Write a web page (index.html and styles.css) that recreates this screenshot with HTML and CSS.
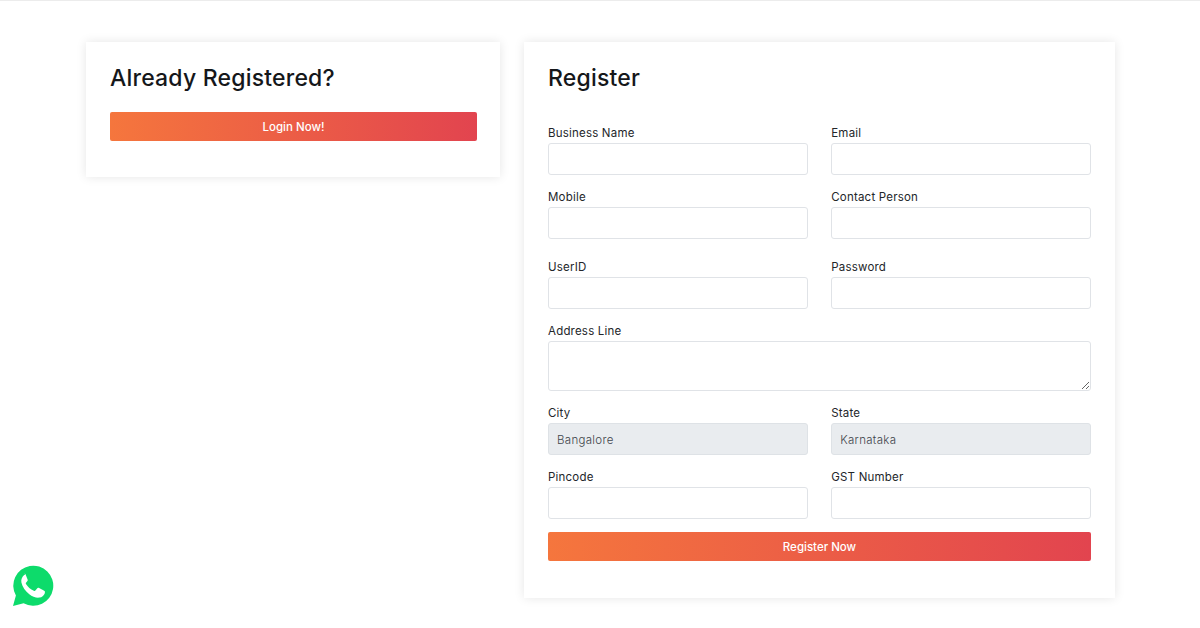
FILE: index.html
```html
<!DOCTYPE html>
<html lang="en">
<head>
<meta charset="utf-8">
<title>Register</title>
<link rel="stylesheet" href="styles.css">
</head>
<body>
<main class="page">
  <section class="card card-login">
    <h2 class="title">Already Registered?</h2>
    <a class="btn" href="#">Login Now!</a>
  </section>
  <section class="card card-register">
    <h2 class="title">Register</h2>
    <form class="form">
      <div class="row">
        <div class="field"><label>Business Name</label><input class="input" type="text"></div>
        <div class="field"><label>Email</label><input class="input" type="text"></div>
      </div>
      <div class="row row-loose">
        <div class="field"><label>Mobile</label><input class="input" type="text"></div>
        <div class="field"><label>Contact Person</label><input class="input" type="text"></div>
      </div>
      <div class="row">
        <div class="field"><label>UserID</label><input class="input" type="text"></div>
        <div class="field"><label>Password</label><input class="input" type="text"></div>
      </div>
      <div class="row">
        <div class="field field-wide"><label>Address Line</label><textarea class="input textarea"></textarea></div>
      </div>
      <div class="row">
        <div class="field"><label>City</label><input class="input filled" type="text" value="Bangalore" disabled></div>
        <div class="field"><label>State</label><input class="input filled" type="text" value="Karnataka" disabled></div>
      </div>
      <div class="row">
        <div class="field"><label>Pincode</label><input class="input" type="text"></div>
        <div class="field"><label>GST Number</label><input class="input" type="text"></div>
      </div>
      <a class="btn" href="#">Register Now</a>
    </form>
  </section>
</main>
<a class="whatsapp" href="#" aria-label="WhatsApp">
  <svg viewBox="0 0 42 42" width="42" height="42">
    <path fill="#0ddb6b" d="M1 41l2.900-10.400A20 20 0 1 1 11.600 38.200z"/>
    <path fill="#fff" d="M14.200 9.300c-.7 0-1.600.3-2.300 1-1.500 1.500-3.200 3.900-2.500 7.300.9 4.600 4.100 8.700 7.900 11.600 3.100 2.400 7 4 10.300 3.400 2.300-.4 4.200-2 5-3.900.4-1.100.4-2.100.2-2.500-.3-.5-.9-.8-1.900-1.300l-3.800-1.900c-.9-.4-1.400-.4-2 .4l-1.700 2.100c-.4.500-.9.500-1.600.2-3.400-1.500-6-3.800-7.800-6.800-.4-.7-.2-1.100.2-1.500l1.200-1.400c.4-.5.500-1 .2-1.600l-1.800-4.500c-.5-1.200-1-1.600-1.600-1.600z"/>
  </svg>
</a>
</body>
</html>
```
FILE: styles.css
```css
* { box-sizing: border-box; }
html, body { height: 100%; }
body {
  margin: 0;
  background: #fff;
  border-top: 1px solid #ececec;
  font-family: "Inter", "Noto Sans", "Liberation Sans", sans-serif;
  color: #212529;
  overflow: hidden;
}
.page {
  display: flex;
  align-items: flex-start;
  gap: 24px;
  padding: 41px 85px 0 86px;
}
.card {
  background: #fff;
  box-shadow: 0 0 10px rgba(0, 0, 0, 0.1);
  padding: 24px;
}
.card-login { width: 414px; height: 135px; flex: none; padding-right: 23px; }
.card-register { width: 591px; height: 556px; flex: none; }
.title {
  margin: 0;
  height: 26px;
  font-size: 23px;
  line-height: 24px;
  font-weight: 500;
  color: #15171a;
  letter-spacing: 0.2px;
}
.card-login .btn { margin-top: 19.5px; }
.form {
  display: flex;
  flex-direction: column;
  gap: 13px;
  margin-top: 32px;
}
.row { display: flex; gap: 23.5px; }
.row-loose { margin-bottom: 6px; }
.field { flex: 1 1 0; min-width: 0; display: flex; flex-direction: column; }
label {
  display: block;
  height: 19px;
  font-size: 11.5px;
  line-height: 19px;
  font-weight: 400;
  letter-spacing: 0.2px;
  color: #23262a;
}
.input {
  display: block;
  width: 100%;
  height: 32px;
  padding: 1px 8px 0;
  border: 1px solid #e0e3e7;
  border-radius: 3px;
  background: #fff;
  font-family: inherit;
  font-size: 11.5px;
  font-weight: 300;
  letter-spacing: 0.3px;
  color: #3f454b;
}
.textarea { height: 50px; resize: vertical; }
.filled { background: #e9ecef; border-color: #dee2e6; opacity: 1; }
.btn {
  display: block;
  height: 29px;
  border-radius: 2px;
  background: linear-gradient(90deg, #f5763d 0%, #e2444f 100%);
  color: #fff;
  font-size: 11.5px;
  font-weight: 500;
  line-height: 30px;
  text-align: center;
  text-decoration: none;
}
.whatsapp {
  position: fixed;
  left: 12px;
  top: 565px;
  width: 42px;
  height: 42px;
  display: block;
}
```
